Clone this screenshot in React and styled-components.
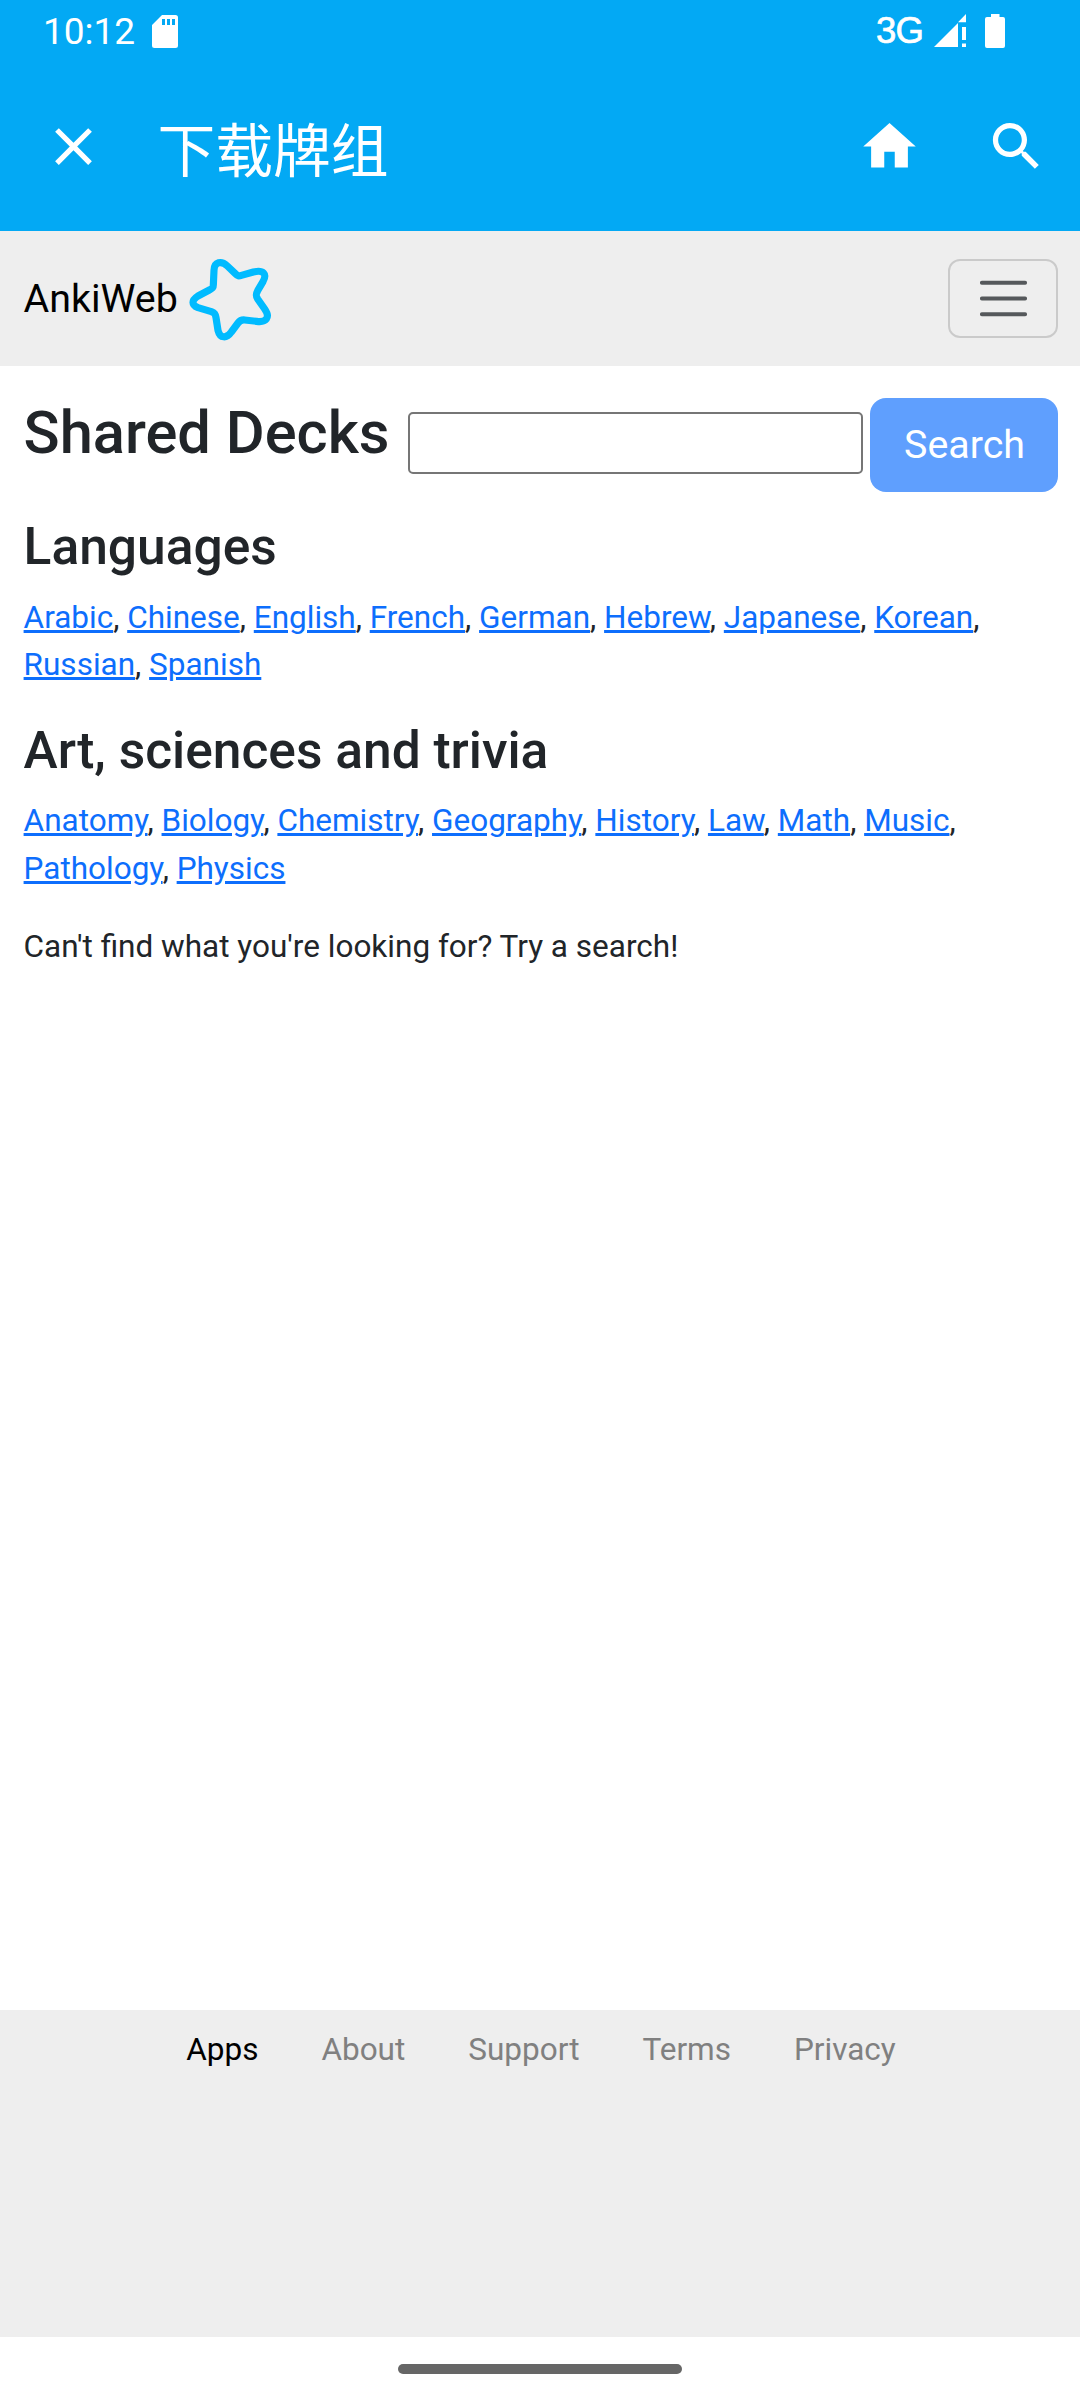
import React from "react";
import styled, { createGlobalStyle } from "styled-components";

const GlobalStyle = createGlobalStyle`
  *, *::before, *::after { box-sizing: border-box; }
  html { font-size: 31.5px; }
  body {
    margin: 0;
    background: #fff;
    color: #212529;
    font-family: Roboto, "Noto Sans CJK SC", sans-serif;
    font-size: 1rem;
    line-height: 1.5;
  }
`;

const Screen = styled.div`
  width: 1080px;
  height: 2400px;
  display: flex;
  flex-direction: column;
  overflow: hidden;
`;

const AppHeader = styled.header`
  flex: none;
  height: 231px;
  background: #03a9f4;
  color: #fff;
`;

const StatusBar = styled.div`
  height: 63px;
  padding: 0 75px 0 43px;
  display: flex;
  justify-content: space-between;
`;

const StatusGroup = styled.div`
  display: flex;
  align-items: flex-start;
`;

const Clock = styled.span`
  font-size: 37px;
  line-height: 63px;
  width: 109px;
`;

const Network = styled.span`
  font-family: "Liberation Sans", Arial, sans-serif;
  font-size: 36.5px;
  line-height: 61px;
  letter-spacing: -0.8px;
  -webkit-text-stroke: 0.7px currentColor;
  width: 58px;
`;

const StatusIcon = styled.svg`
  display: block;
  fill: currentColor;
  margin-top: ${(p) => p.$top}px;
  margin-right: ${(p) => p.$gap || 0}px;
`;

const Toolbar = styled.div`
  height: 166px;
  padding: 0 32px 0 42px;
  display: flex;
  align-items: center;
`;

const ToolIcon = styled.svg`
  display: block;
  width: 63px;
  height: 63px;
  fill: currentColor;
`;

const Title = styled.h1`
  flex: 1;
  margin: 11px 0 0 52.5px;
  font-size: 57.75px;
  font-weight: 400;
  line-height: 80px;
`;

const ToolActions = styled.div`
  display: flex;
  gap: 64px;
`;

const Navbar = styled.nav`
  flex: none;
  height: 135px;
  padding: 0 22px 0 23.6px;
  background: #eee;
  display: flex;
  align-items: center;
  justify-content: space-between;
`;

const Brand = styled.a`
  display: flex;
  align-items: center;
  color: #000;
  font-size: 1.25rem;
  text-decoration: none;
`;

const BrandName = styled.span`
  padding-top: 1px;
`;

const BrandLogo = styled.svg`
  display: block;
  width: 90px;
  height: 95px;
  margin: -1px 0 0 7.5px;
`;

const Toggler = styled.button`
  width: 110px;
  height: 79px;
  padding: 0;
  border: 2px solid rgba(0, 0, 0, 0.15);
  border-radius: 12px;
  background: transparent;
  display: flex;
  align-items: center;
  justify-content: center;
`;

const Main = styled.main`
  flex: 1;
  padding: 32px 22px 0 23.6px;
`;

const SearchRow = styled.div`
  height: 94.4px;
  margin-bottom: 23.85px;
  display: flex;
  align-items: flex-start;
`;

const PageTitle = styled.h1`
  margin: 0;
  width: 384.9px;
  font-size: 59.6px;
  font-weight: 500;
  line-height: 1.2;
  white-space: nowrap;
`;

const SearchInput = styled.input`
  width: 454.5px;
  height: 62px;
  margin: 14px 7px 0 0;
  padding: 2px 4px;
  border: 2px solid #767676;
  border-radius: 5px;
  background: #fff;
  font: inherit;
  outline: none;
`;

const SearchButton = styled.button`
  width: 188px;
  height: 94px;
  padding: 0 0 0 1px;
  border: 0;
  border-radius: 16px;
  background: #5f9ffe;
  color: #fff;
  font-family: inherit;
  font-size: 1.25rem;
  line-height: 1.5;
`;

const SectionTitle = styled.h2`
  margin: 0 0 0.5rem;
  font-size: 51.5px;
  font-weight: 500;
  line-height: 1.2;
`;

const Paragraph = styled.p`
  margin: 0 0 1rem;
`;

const DeckLink = styled.a`
  color: #0d6efd;
  text-decoration: underline;
`;

const Footer = styled.footer`
  flex: none;
  height: 327px;
  padding: 0.5rem 0 0 2px;
  background: #eee;
  display: flex;
  justify-content: center;
  align-items: flex-start;
`;

const FooterLink = styled.a`
  padding: 0 1rem;
  color: ${(p) => (p.$active ? "#000" : "#808080")};
  text-decoration: none;
`;

const GestureBar = styled.div`
  flex: none;
  height: 63px;
  background: #fff;
  display: flex;
  justify-content: center;
  align-items: flex-start;
  padding-top: 27px;
`;

const GestureHandle = styled.div`
  width: 284px;
  height: 10px;
  border-radius: 5px;
  background: #666;
`;

const SECTIONS = [
  {
    title: "Languages",
    decks: ["Arabic", "Chinese", "English", "French", "German", "Hebrew", "Japanese", "Korean", "Russian", "Spanish"],
  },
  {
    title: "Art, sciences and trivia",
    decks: ["Anatomy", "Biology", "Chemistry", "Geography", "History", "Law", "Math", "Music", "Pathology", "Physics"],
  },
];

const FOOTER_LINKS = ["Apps", "About", "Support", "Terms", "Privacy"];

function DeckSection({ title, decks }) {
  return (
    <>
      <SectionTitle>{title}</SectionTitle>
      <Paragraph>
        {decks.map((deck, i) => (
          <React.Fragment key={deck}>
            {i > 0 && ", "}
            <DeckLink href="#">{deck}</DeckLink>
          </React.Fragment>
        ))}
      </Paragraph>
    </>
  );
}

export default function App() {
  return (
    <Screen>
      <GlobalStyle />
      <AppHeader>
        <StatusBar>
          <StatusGroup>
            <Clock>10:12</Clock>
            <StatusIcon $top={15} width="26" height="33" viewBox="0 0 26 33">
              <path
                fillRule="evenodd"
                d="M10 0H23.500Q26 0 26 2.500V30.500Q26 33 23.500 33H2.500Q0 33 0 30.500V10ZM10 4V10H13V4ZM15 4V10H18V4ZM20 4V10H23V4Z"
              />
            </StatusIcon>
          </StatusGroup>
          <StatusGroup>
            <Network>3G</Network>
            <StatusIcon $top={14} $gap={18} width="33" height="33" viewBox="0 0 33 33">
              <path d="M0 33L24 9V33ZM24 8.300L32 0V8.300ZM28 13H32V26H28ZM28 29.500H32V33H28Z" />
            </StatusIcon>
            <StatusIcon $top={14} width="20" height="34" viewBox="0 0 20 34">
              <path d="M6 0H14.500V3H18Q20 3 20 5V32Q20 34 18 34H2Q0 34 0 32V5Q0 3 2 3H6Z" />
            </StatusIcon>
          </StatusGroup>
        </StatusBar>
        <Toolbar>
          <ToolIcon viewBox="0 0 24 24">
            <path d="M19 6.410L17.590 5 12 10.590 6.410 5 5 6.410 10.590 12 5 17.590 6.410 19 12 13.410 17.590 19 19 17.590 13.410 12z" />
          </ToolIcon>
          <Title>下载牌组</Title>
          <ToolActions>
            <ToolIcon viewBox="0 0 24 24">
              <path d="M10 20v-6h4v6h5v-8h3L12 3 2 12h3v8z" />
            </ToolIcon>
            <ToolIcon viewBox="0 0 24 24">
              <path d="M15.500 14h-.79l-.28-.27C15.410 12.590 16 11.110 16 9.500 16 5.910 13.090 3 9.500 3S3 5.910 3 9.500 5.910 16 9.500 16c1.610 0 3.090-.59 4.230-1.570l.27.28v.79l5 4.990L20.490 19l-4.990-5zm-6 0C7.010 14 5 11.990 5 9.500S7.010 5 9.500 5 14 7.010 14 9.500 11.990 14 9.500 14z" />
            </ToolIcon>
          </ToolActions>
        </Toolbar>
      </AppHeader>

      <Navbar>
        <Brand href="#">
          <BrandName>AnkiWeb</BrandName>
          <BrandLogo viewBox="45 30 270 285">
            <path
              fill="none"
              stroke="#00bbff"
              strokeWidth="21.5"
              strokeLinejoin="round"
              d="M130 132L132 88C133 62 154 58 172 75L196 98C204 106 206 106 214 103L250 93C280 86 292 98 279 122L263 149C257 160 257 165 263 174L284 204C302 230 288 245 260 241L224 237C214 236 210 238 204 246L184 273C170 293 150 293 144 268L138 230C136 218 134 216 124 212L84 200C64 192 64 178 84 165L118 147C128 141 130 140 130 132Z"
            />
          </BrandLogo>
        </Brand>
        <Toggler aria-label="Menu">
          <svg width="59" height="59" viewBox="0 0 30 30">
            <path
              stroke="rgba(33,37,41,.75)"
              strokeLinecap="round"
              strokeMiterlimit="10"
              strokeWidth="2"
              d="M4 7h22M4 15h22M4 23h22"
            />
          </svg>
        </Toggler>
      </Navbar>

      <Main>
        <SearchRow>
          <PageTitle>Shared Decks</PageTitle>
          <SearchInput type="text" />
          <SearchButton>Search</SearchButton>
        </SearchRow>
        {SECTIONS.map((s) => (
          <DeckSection key={s.title} title={s.title} decks={s.decks} />
        ))}
        <Paragraph>Can't find what you're looking for? Try a search!</Paragraph>
      </Main>

      <Footer>
        {FOOTER_LINKS.map((label, i) => (
          <FooterLink key={label} href="#" $active={i === 0}>
            {label}
          </FooterLink>
        ))}
      </Footer>

      <GestureBar>
        <GestureHandle />
      </GestureBar>
    </Screen>
  );
}
